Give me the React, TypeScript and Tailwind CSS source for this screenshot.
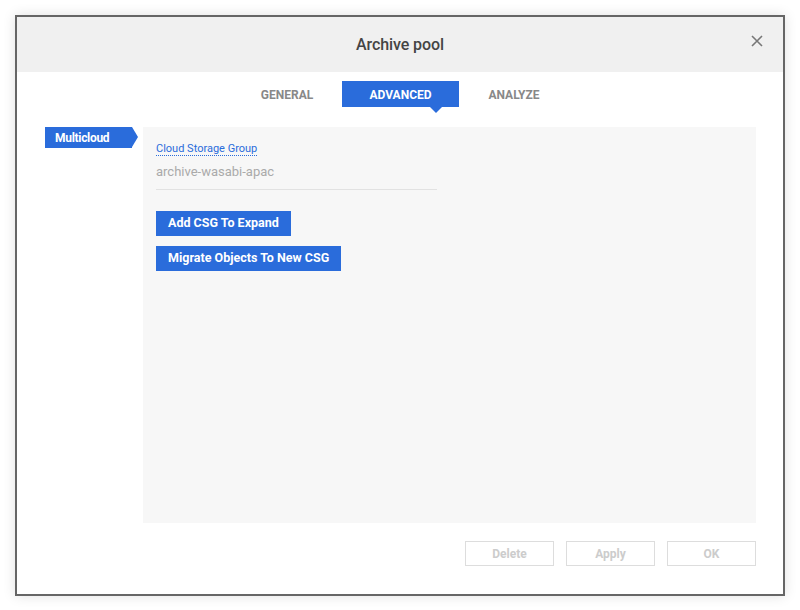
export default function App() {
  return (
    <div className="w-[800px] h-[610px] bg-white pt-[15px] pl-[15px]" style={{ fontFamily: "Roboto, 'Liberation Sans', sans-serif" }}>
      <div className="w-[770px] h-[581px] border-2 border-[#666] bg-white flex flex-col shadow-[0_0_12px_rgba(0,0,0,0.12)]">
        {/* header */}
        <div className="h-[55px] bg-[#f0f0f0] flex items-center justify-center relative shrink-0">
          <span className="text-[16px] font-medium text-[#444] tracking-[-0.1px]">Archive pool</span>
          <button className="absolute right-[19px] top-[17px] text-[#777]">
            <svg width="14" height="14" viewBox="0 0 14 14" fill="none" stroke="currentColor" strokeWidth="1.6">
              <path d="M2 2 L12 12 M12 2 L2 12" />
            </svg>
          </button>
        </div>

        {/* tabs */}
        <div className="flex justify-center mt-[9px] h-[26px] shrink-0 pl-[1px]">
          <div className="w-[110px] flex items-center justify-center pt-[2px] text-[12px] font-bold text-[#888]">GENERAL</div>
          <div className="w-[117px] bg-[#2a6cdb] flex items-center justify-center pt-[2px] text-[12px] font-bold text-white relative">
            ADVANCED
            <span className="absolute top-full left-[88px] w-0 h-0 border-l-[6px] border-r-[6px] border-t-[6px] border-l-transparent border-r-transparent border-t-[#2a6cdb]" />
          </div>
          <div className="w-[110px] flex items-center justify-center pt-[2px] text-[12px] font-bold text-[#888]">ANALYZE</div>
        </div>

        {/* body */}
        <div className="flex mt-[20px] ml-[28px] mr-[27px]">
          <div className="w-[98px] shrink-0">
            <div className="relative h-[21px] w-[87px] bg-[#2a6cdb] text-white text-[12px] font-bold flex items-center pl-[10px] tracking-[-0.3px]">
              Multicloud
              <span className="absolute left-full top-0 w-0 h-0 border-t-[10.5px] border-b-[10.5px] border-l-[6px] border-t-transparent border-b-transparent border-l-[#2a6cdb]" />
            </div>
          </div>
          <div className="flex-1 h-[396px] bg-[#f7f7f7] pl-[13px] pt-[8px]">
            <div className="text-[11px] text-[#2a6cdb] inline-block border-b border-dotted border-[#2a6cdb] leading-[13px]">Cloud Storage Group</div>
            <div className="w-[281px] border-b border-[#e2e2e2] pt-[5px] pb-[9px] text-[13px] text-[#aaa] leading-[16px]">archive-wasabi-apac</div>
            <div className="mt-[21px] flex flex-col items-start gap-[10px]">
              <button className="h-[25px] px-[12px] bg-[#2a6cdb] text-white text-[12.5px] font-bold">Add CSG To Expand</button>
              <button className="h-[25px] px-[12px] bg-[#2a6cdb] text-white text-[12.5px] font-bold">Migrate Objects To New CSG</button>
            </div>
          </div>
        </div>

        {/* footer */}
        <div className="flex justify-end gap-[12px] mr-[27px] mt-[18px]">
          {["Delete", "Apply", "OK"].map((t) => (
            <button key={t} className="w-[89px] h-[25px] border border-[#ddd] bg-white text-[12px] font-bold text-[#ccc]">{t}</button>
          ))}
        </div>
      </div>
    </div>
  );
}
